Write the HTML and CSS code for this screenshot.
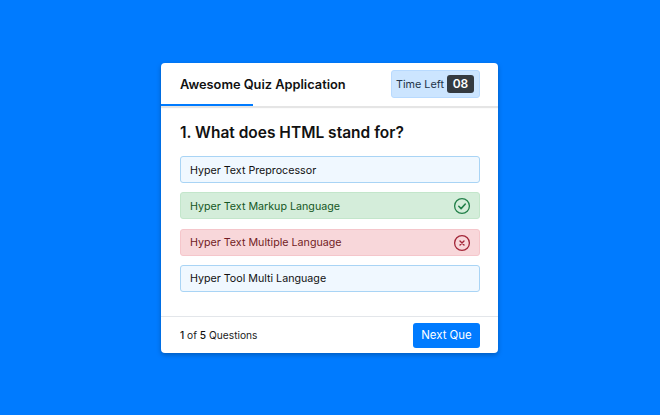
FILE: index.html
```html
<!DOCTYPE html>
<html lang="en">
<head>
<meta charset="utf-8">
<title>Awesome Quiz Application</title>
<link rel="stylesheet" href="styles.css">
</head>
<body>
<main class="quiz">
  <header class="quiz-head">
    <div class="title">Awesome Quiz Application</div>
    <div class="timer"><span class="timer-label">Time Left</span><span class="timer-sec">08</span></div>
    <div class="progress"></div>
  </header>
  <section class="quiz-body">
    <h1 class="question">1. What does HTML stand for?</h1>
    <div class="options">
      <div class="option">Hyper Text Preprocessor</div>
      <div class="option correct">Hyper Text Markup Language
        <svg class="icon" viewBox="0 0 18 18" width="18" height="18" fill="none" stroke="currentColor"><circle cx="9" cy="9" r="7.4" stroke-width="1.3"/><path d="M5.8 9.3l2.3 2.3 4.2-4.6" stroke-width="1.6" stroke-linecap="round" stroke-linejoin="round"/></svg>
      </div>
      <div class="option incorrect">Hyper Text Multiple Language
        <svg class="icon" viewBox="0 0 18 18" width="18" height="18" fill="none" stroke="currentColor"><circle cx="9" cy="9" r="7.4" stroke-width="1.3"/><path d="M7 7l4 4M11 7l-4 4" stroke-width="1.4" stroke-linecap="round"/></svg>
      </div>
      <div class="option">Hyper Tool Multi Language</div>
    </div>
  </section>
  <footer class="quiz-foot">
    <div class="count"><b>1</b> of <b>5</b> Questions</div>
    <button class="next">Next Que</button>
  </footer>
</main>
</body>
</html>
```
FILE: styles.css
```css
* { box-sizing: border-box; margin: 0; padding: 0; }
html, body { height: 100%; }
body {
  background: #007bff;
  font-family: "Inter", "Liberation Sans", sans-serif;
  display: flex;
  justify-content: center;
  padding: 63px 1px 0 0;
}
.quiz {
  width: 337px;
  height: 290px;
  background: #fff;
  border-radius: 4px;
  box-shadow: 0 2px 5px rgba(0, 0, 0, 0.25);
  display: flex;
  flex-direction: column;
}
.quiz-head {
  position: relative;
  height: 43px;
  flex: none;
  display: flex;
  align-items: center;
  justify-content: space-between;
  padding: 0 18px 1px 19px;
  box-shadow: 0 2px 1px rgba(0, 0, 0, 0.1);
}
.title { font-size: 12.8px; font-weight: 600; color: #111; white-space: nowrap; }
.timer {
  width: 89px;
  height: 28px;
  background: #cce5ff;
  border: 1px solid #b8daff;
  border-radius: 3px;
  display: flex;
  align-items: center;
  justify-content: space-between;
  padding: 0 5px 0 4px;
  font-size: 10.8px;
}
.timer-label { color: #23344a; white-space: nowrap; }
.timer-sec {
  width: 27px;
  height: 18px;
  background: #343a40;
  color: #fff;
  border-radius: 3px;
  font-size: 12px;
  font-weight: 600;
  line-height: 18px;
  text-align: center;
}
.progress {
  position: absolute;
  left: 0;
  bottom: 0;
  width: 92px;
  height: 2px;
  background: #007bff;
}
.quiz-body { flex: 1; padding: 14px 18px 0 19px; }
.question { font-size: 15.5px; font-weight: 600; color: #111; line-height: 25px; }
.options { margin-top: 11px; display: flex; flex-direction: column; gap: 9.3px; }
.option {
  height: 27px;
  background: aliceblue;
  border: 1px solid #a9d4f5;
  border-radius: 3px;
  padding: 1px 9px 0;
  display: flex;
  align-items: center;
  justify-content: space-between;
  font-size: 10.7px;
  color: #111;
}
.option.correct { background: #d4edda; border-color: #c3e6cb; color: #155724; }
.option.incorrect { background: #f8d7da; border-color: #f5c6cb; color: #721c24; }
.icon { flex: none; margin-right: -1px; }
.correct .icon { color: #23804a; }
.incorrect .icon { color: #a32638; }
.quiz-foot {
  height: 37px;
  flex: none;
  border-top: 1px solid #e3e6ea;
  display: flex;
  align-items: center;
  justify-content: space-between;
  padding: 0 18px 0 19px;
}
.count { font-size: 10.2px; color: #222; }
.count b { font-weight: 500; color: #111; }
.next {
  width: 67px;
  height: 25px;
  background: #007bff;
  color: #fff;
  border: none;
  border-radius: 3px;
  font: 400 11.4px "Inter", "Liberation Sans", sans-serif;
}
```
